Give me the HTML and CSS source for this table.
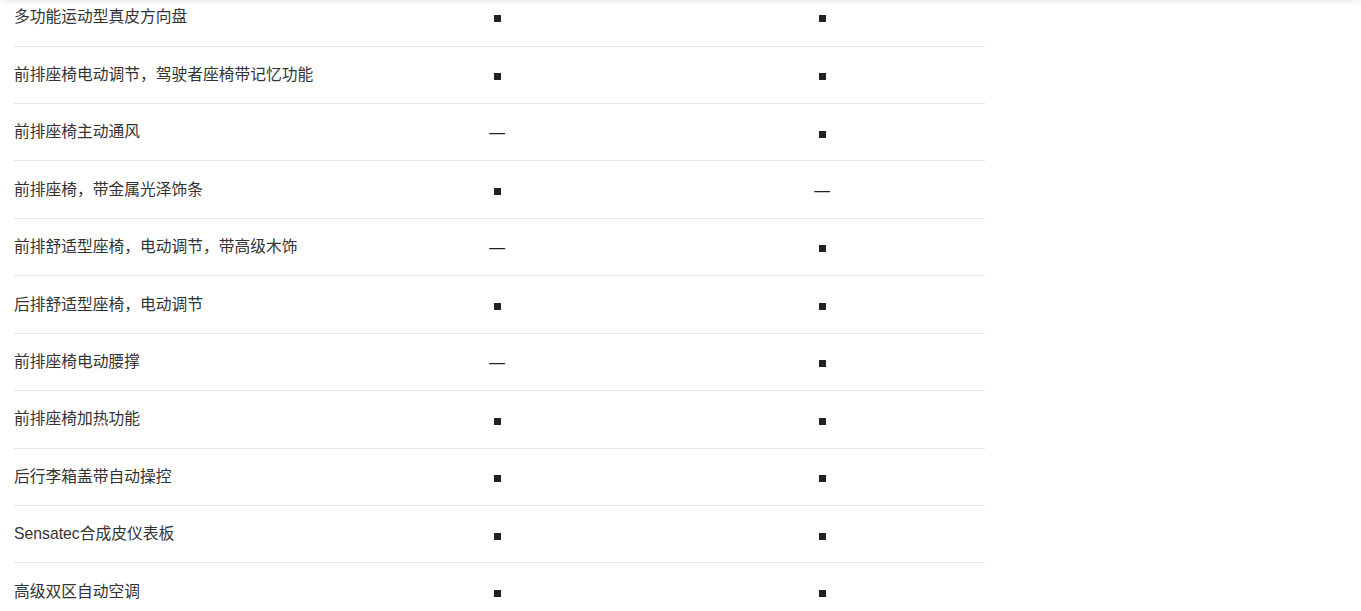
FILE: index.html
```html
<!DOCTYPE html>
<html lang="zh-CN">
<head>
    <meta charset="UTF-8">
    <meta name="viewport" content="width=device-width, initial-scale=1.0">
    <title>舒适配置</title>
    <link rel="stylesheet" href="styles.css">
</head>
<body>

    <!-- 顶部导航在视口上方，只露出阴影 -->
    <div class="top-bar"></div>

    <main class="spec">
        <table class="spec-table">
            <colgroup>
                <col class="col-name">
                <col class="col-a">
                <col class="col-b">
            </colgroup>
            <tbody>
                <tr><td>多功能运动型真皮方向盘</td><td><span class="yes" title="标配"></span></td><td><span class="yes" title="标配"></span></td></tr>
                <tr><td>前排座椅电动调节，驾驶者座椅带记忆功能</td><td><span class="yes" title="标配"></span></td><td><span class="yes" title="标配"></span></td></tr>
                <tr><td>前排座椅主动通风</td><td><span class="no">—</span></td><td><span class="yes" title="标配"></span></td></tr>
                <tr><td>前排座椅，带金属光泽饰条</td><td><span class="yes" title="标配"></span></td><td><span class="no">—</span></td></tr>
                <tr><td>前排舒适型座椅，电动调节，带高级木饰</td><td><span class="no">—</span></td><td><span class="yes" title="标配"></span></td></tr>
                <tr><td>后排舒适型座椅，电动调节</td><td><span class="yes" title="标配"></span></td><td><span class="yes" title="标配"></span></td></tr>
                <tr><td>前排座椅电动腰撑</td><td><span class="no">—</span></td><td><span class="yes" title="标配"></span></td></tr>
                <tr><td>前排座椅加热功能</td><td><span class="yes" title="标配"></span></td><td><span class="yes" title="标配"></span></td></tr>
                <tr><td>后行李箱盖带自动操控</td><td><span class="yes" title="标配"></span></td><td><span class="yes" title="标配"></span></td></tr>
                <tr><td>Sensatec合成皮仪表板</td><td><span class="yes" title="标配"></span></td><td><span class="yes" title="标配"></span></td></tr>
                <tr><td>高级双区自动空调</td><td><span class="yes" title="标配"></span></td><td><span class="yes" title="标配"></span></td></tr>
            </tbody>
        </table>
    </main>

</body>
</html>
```

FILE: styles.css
```css
* { margin: 0; padding: 0; box-sizing: border-box; }
html, body { background: #fff; overflow: hidden; }
body {
    font-family: 'Liberation Sans', 'Noto Sans CJK SC', sans-serif;
    font-size: 15.75px;
    color: #333;
}

/* 固定导航的阴影 */
.top-bar {
    position: fixed;
    top: -40px;
    left: 0;
    right: 0;
    height: 40px;
    background: #fff;
    box-shadow: 0 0 8px rgba(0, 0, 0, 0.12);
    z-index: 10;
}

.spec { padding: 0 14px; margin-top: -11.4px; }
.spec-table { width: 971px; border-collapse: collapse; table-layout: fixed; }
.col-name { width: 321px; }
.col-a { width: 324px; }
.col-b { width: 326px; }
.spec-table td {
    padding: 0;
    height: 57.45px;
    line-height: 20px;
    vertical-align: middle;
    border-bottom: 1px solid #e5e5e5;
    text-align: center;
}
.spec-table td:first-child { text-align: left; }
.spec-table tr:last-child td { border-bottom: none; }

.yes {
    display: inline-block;
    width: 7px;
    height: 7px;
    background: #222;
    vertical-align: middle;
    position: relative;
    top: 1px;
}
.no { color: #222; position: relative; top: 1px; }
```
